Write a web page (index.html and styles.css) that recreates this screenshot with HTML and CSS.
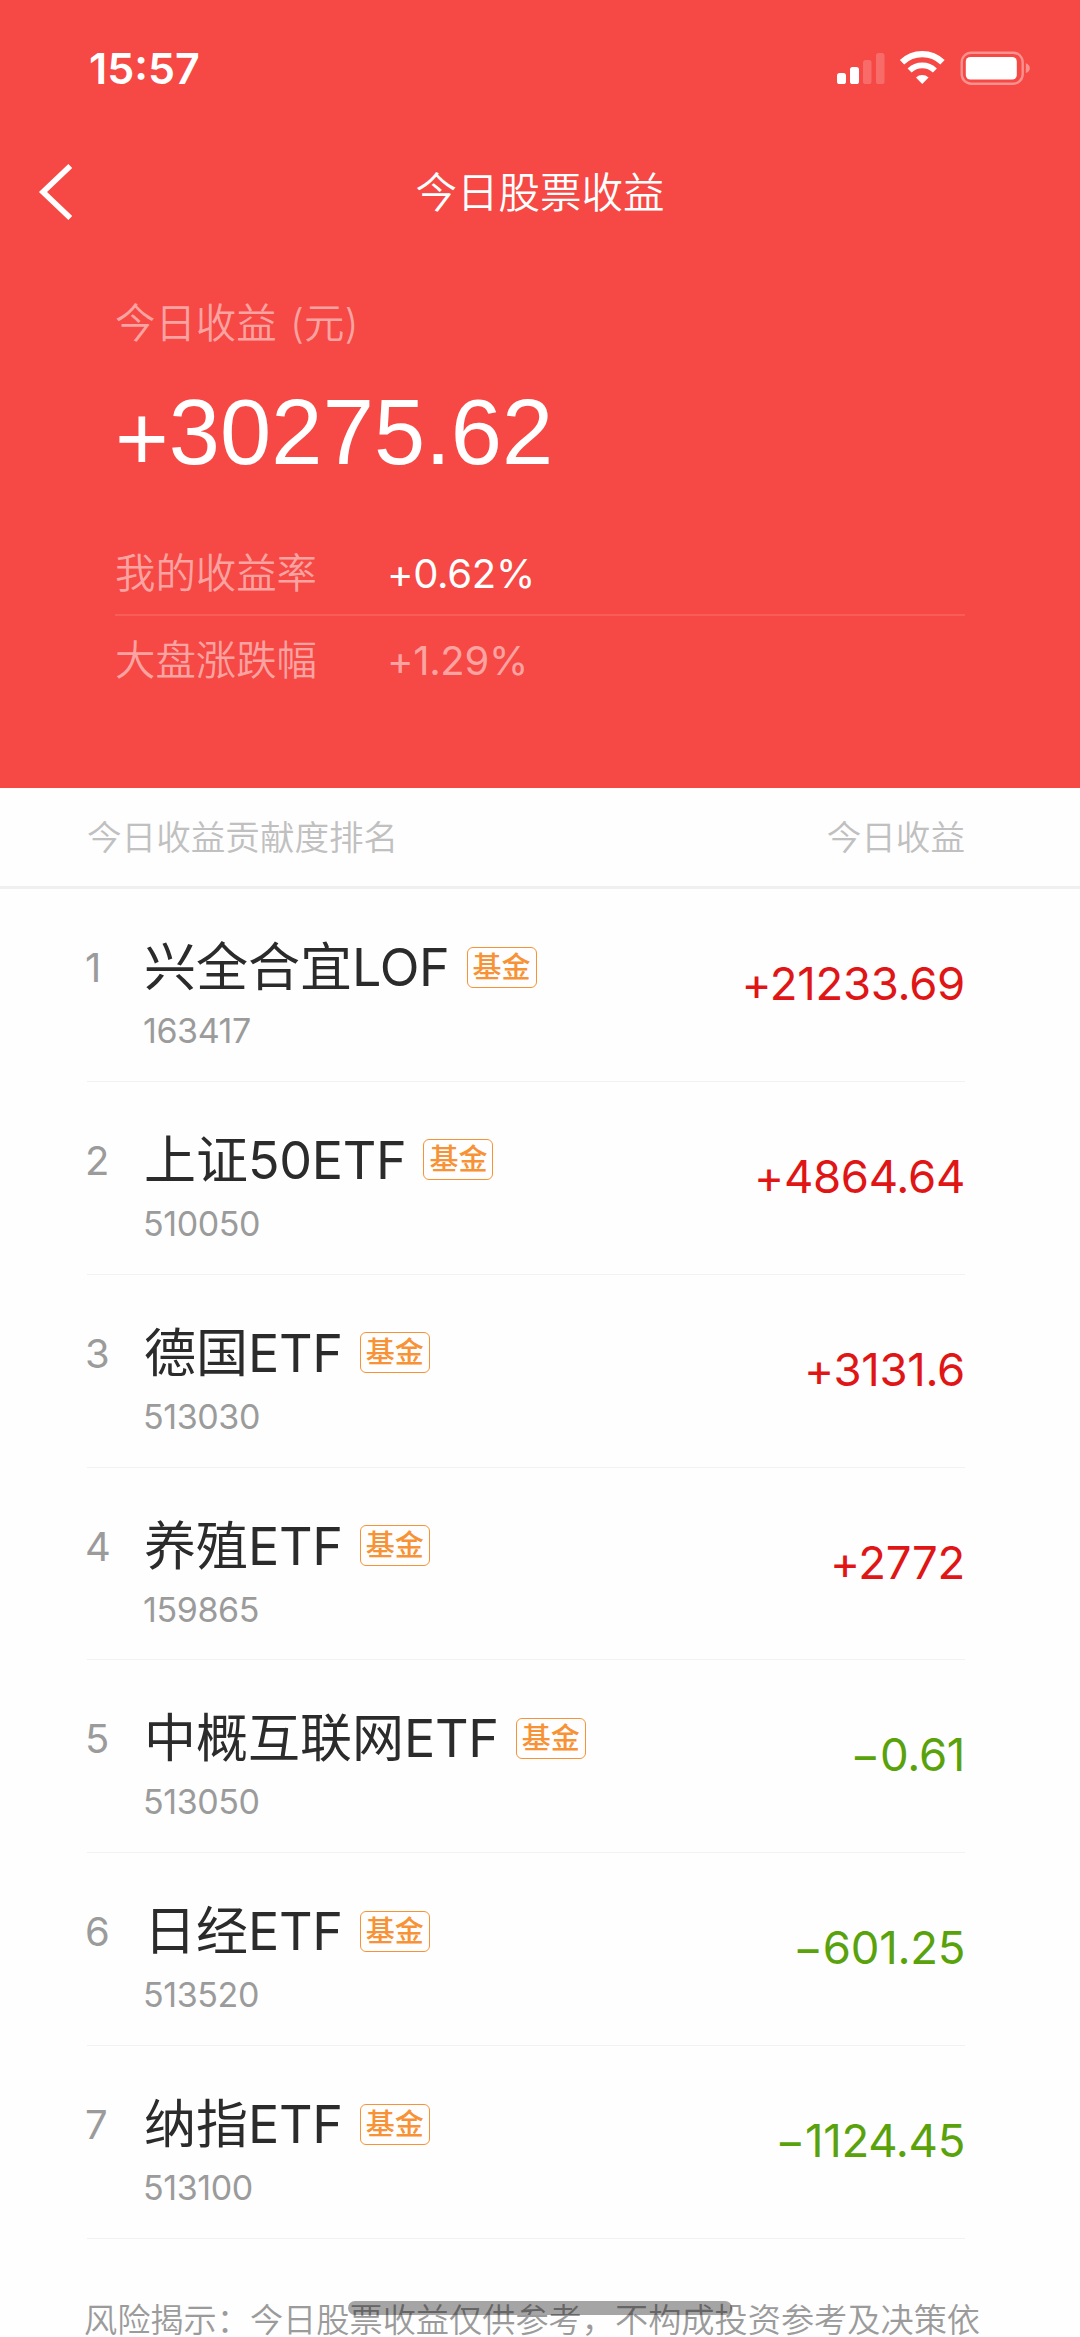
FILE: index.html
```html
<!DOCTYPE html>
<html lang="zh-CN">
<head>
<meta charset="utf-8">
<title>今日股票收益</title>
<link rel="stylesheet" href="styles.css">
</head>
<body>
<div class="screen">
  <header class="hero">
    <div class="status">
      <span class="time">15:57</span>
      <svg class="status-icons" width="196" height="36" viewBox="0 0 196 36" fill="#fff">
        <rect x="0" y="23" width="9" height="11" rx="2.6"/>
        <rect x="13" y="17" width="9" height="17" rx="2.6"/>
        <rect x="26" y="10" width="8.5" height="24" rx="2.6" opacity=".2"/>
        <rect x="39" y="3" width="8.5" height="31" rx="2.6" opacity=".2"/>
        <g fill="none" stroke="#fff">
          <path d="M65 12.300a29.200 29.200 0 0 1 40.500 0" stroke-width="6.200"/>
          <path d="M72.600 20.500a18.400 18.400 0 0 1 25.300 0" stroke-width="5.800"/>
        </g>
        <path d="M85.250 34l-6.300-6.400a9.200 9.200 0 0 1 12.600 0z"/>
        <rect x="124.700" y="2.700" width="61" height="31" rx="9.500" fill="none" stroke="#fff" stroke-width="2.400" opacity=".4"/>
        <rect x="128.800" y="7" width="51" height="22.500" rx="4.500"/>
        <path d="M188.800 13.300q4 1.500 4 4.900t-4 4.900z" opacity=".4"/>
      </svg>
    </div>
    <nav class="nav">
      <svg class="back" width="36" height="58" viewBox="0 0 36 58" fill="none" stroke="#fff" stroke-width="5.600"><path d="M34.300 3L7 29l27.300 26"/></svg>
      <h1 class="title">今日股票收益</h1>
    </nav>
    <section class="summary">
      <p class="label">今日收益 (元)</p>
      <p class="total"><span class="sign">+</span>30275.62</p>
      <div class="rate"><span class="rate-name">我的收益率</span><span class="rate-value">+0.62%</span></div>
      <div class="rate rate-market"><span class="rate-name">大盘涨跌幅</span><span class="rate-value">+1.29%</span></div>
    </section>
  </header>
  <main>
    <div class="list-head"><span>今日收益贡献度排名</span><span>今日收益</span></div>
    <ol class="list">
      <li class="row"><span class="rank">1</span><div class="info"><div class="name">兴全合宜<span class="latin">LOF</span><span class="tag">基金</span></div><div class="code">163417</div></div><span class="amount up">+21233.69</span></li>
      <li class="row"><span class="rank">2</span><div class="info"><div class="name">上证<span class="latin">50ETF</span><span class="tag">基金</span></div><div class="code">510050</div></div><span class="amount up">+4864.64</span></li>
      <li class="row"><span class="rank">3</span><div class="info"><div class="name">德国<span class="latin">ETF</span><span class="tag">基金</span></div><div class="code">513030</div></div><span class="amount up">+3131.6</span></li>
      <li class="row"><span class="rank">4</span><div class="info"><div class="name">养殖<span class="latin">ETF</span><span class="tag">基金</span></div><div class="code">159865</div></div><span class="amount up">+2772</span></li>
      <li class="row"><span class="rank">5</span><div class="info"><div class="name">中概互联网<span class="latin">ETF</span><span class="tag">基金</span></div><div class="code">513050</div></div><span class="amount down">−0.61</span></li>
      <li class="row"><span class="rank">6</span><div class="info"><div class="name">日经<span class="latin">ETF</span><span class="tag">基金</span></div><div class="code">513520</div></div><span class="amount down">−601.25</span></li>
      <li class="row"><span class="rank">7</span><div class="info"><div class="name">纳指<span class="latin">ETF</span><span class="tag">基金</span></div><div class="code">513100</div></div><span class="amount down">−1124.45</span></li>
    </ol>
    <p class="notice">风险揭示：今日股票收益仅供参考，不构成投资参考及决策依</p>
  </main>
  <div class="home-indicator"></div>
</div>
</body>
</html>
```
FILE: styles.css
```css
* { box-sizing: border-box; }

body, h1, p, ol { margin: 0; padding: 0; }

body {
  background: #fefefe;
  font-family: Inter, "Noto Sans CJK SC", sans-serif;
  font-weight: 350;
}

.screen {
  position: relative;
  width: 1080px;
  height: 2337px;
  overflow: hidden;
}

.hero {
  height: 788px;
  background: #f64844;
  color: #fff;
}

.status {
  display: flex;
  justify-content: space-between;
  align-items: flex-start;
  height: 132px;
  padding: 50px 47px 0 89px;
}

.time {
  font-size: 43px;
  font-weight: 600;
  line-height: 37px;
}

.nav {
  display: grid;
  grid-template-columns: 36px 1fr 36px;
  align-items: center;
  height: 120px;
  padding: 0 36px;
}

.title {
  padding-top: 2px;
  font-size: 41.5px;
  font-weight: 350;
  line-height: 60px;
  text-align: center;
}

.summary { padding: 41px 115px 0; }

.label {
  font-size: 40.4px;
  line-height: 62px;
  word-spacing: 2px;
  color: #fba3a1;
}

.total {
  margin-top: 18px;
  font-family: "Liberation Sans", sans-serif;
  font-size: 92px;
  font-weight: 400;
  line-height: 119px;
  letter-spacing: .1px;
}

.sign {
  line-height: 0;
  vertical-align: -6px;
}

.rate {
  display: flex;
  height: 85px;
  margin-top: 39px;
  padding-top: 1px;
  border-bottom: 2px solid #f85d59;
  font-size: 40.4px;
  line-height: 83px;
}

.rate-name {
  width: 272px;
  color: #fba3a1;
}

.rate-value {
  font-size: 40px;
  font-weight: 400;
  letter-spacing: -.3px;
}

.rate-market {
  margin-top: 2px;
  border-bottom: 0;
  color: #fba3a1;
}

.list-head {
  display: flex;
  justify-content: space-between;
  height: 101px;
  padding: 0 115px 0 87px;
  border-bottom: 3px solid #f0f0f0;
  font-size: 34.6px;
  line-height: 98px;
  color: #c0c0c0;
}

.list {
  padding: 0 115px 0 87px;
  list-style: none;
}

.row {
  display: flex;
  align-items: flex-start;
  height: 192.85px;
  border-bottom: 1.5px solid #f2f2f2;
}

.rank {
  width: 57px;
  padding-top: 51px;
  font-size: 40px;
  font-weight: 400;
  line-height: 56px;
  text-indent: -2px;
  color: #9b9b9b;
}

.info {
  flex: 1;
  padding-top: 49px;
}

.name {
  display: flex;
  align-items: center;
  height: 60px;
  font-size: 52px;
  font-weight: 400;
  line-height: 60px;
  color: #2b2b2b;
}

.latin {
  font-weight: 400;
  letter-spacing: -.3px;
}

.tag {
  height: 41px;
  margin: -2px 0 0 17px;
  padding: 0 5px;
  border: 1.5px solid #f79336;
  border-radius: 6px;
  font-size: 29px;
  font-weight: 500;
  line-height: 39px;
  color: #f79336;
}

.code {
  margin-top: 11px;
  font-size: 34px;
  font-weight: 400;
  line-height: 43px;
  letter-spacing: -.4px;
  text-indent: -1px;
  color: #9b9b9b;
}

.amount {
  padding-top: 65px;
  font-size: 45.5px;
  font-weight: 400;
  line-height: 60px;
  letter-spacing: -.3px;
}

.up { color: #e01515; }

.down { color: #5aa20c; }

.notice {
  margin-top: 64px;
  padding-left: 84px;
  font-size: 33.2px;
  line-height: 34px;
  white-space: nowrap;
  color: #9b9b9b;
}

/* Floats above the page content */
.home-indicator {
  position: absolute;
  left: 348px;
  top: 2301px;
  width: 384px;
  height: 14px;
  border-radius: 7px;
  background: rgba(0, 0, 0, .35);
}
```
